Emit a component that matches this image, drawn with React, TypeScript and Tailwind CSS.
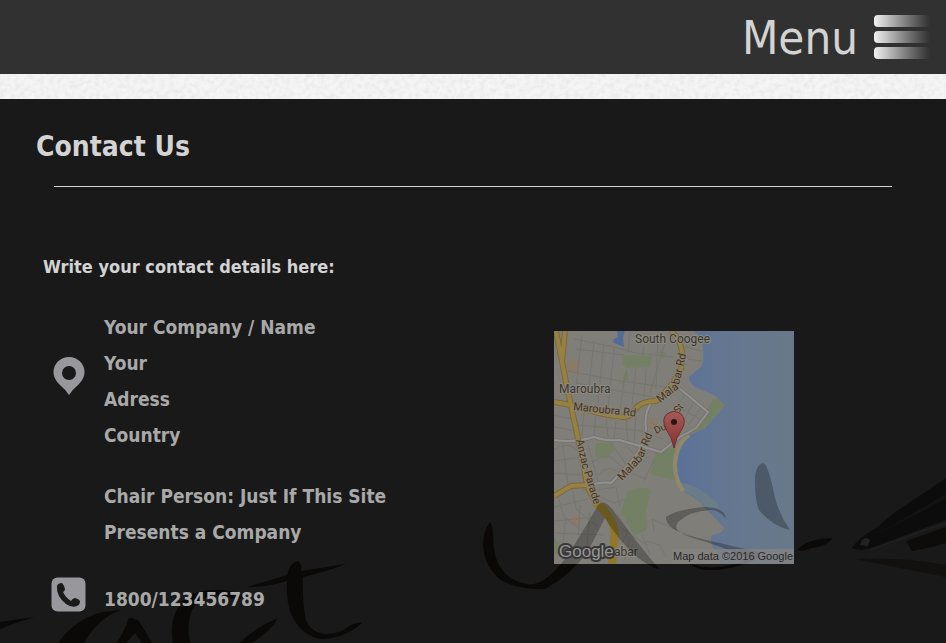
import React from 'react';

const address = ['Your Company / Name', 'Your', 'Adress', 'Country'];

const streets = [
  'M20 8L60 16L82 22L120 26', 'M22 18L70 24', 'M14 40L66 50L112 56', 'M22 52L64 60L100 66', 'M28 4L22 56', 'M40 10L34 66', 'M50 12L44 72', 'M60 18L54 76',
  'M72 40L66 78', 'M82 38L78 74', 'M92 38L90 66', 'M104 0L102 58', 'M112 8L96 62', 'M76 0L74 22', 'M90 16L88 26', 'M130 4L146 8', 'M132 16L148 20', 'M134 28L148 30',
  'M0 84L18 88L26 96', 'M30 82L28 104', 'M42 84L40 104', 'M52 88L54 106', 'M62 90L60 108', 'M72 88L74 110', 'M82 84L80 114', 'M24 94L90 100', 'M0 96L22 100',
  'M0 118Q18 108 26 124', 'M0 130L28 126', 'M8 108L14 154', 'M0 142L30 144', 'M34 114L44 150', 'M38 132Q52 118 64 132T76 140', 'M44 144Q56 130 70 146', 'M60 116L74 136', 'M70 112L84 128',
  'M36 160L62 156L66 176', 'M46 166L60 172L72 168', 'M0 176L34 168', 'M4 166L10 186L30 200', 'M18 156L22 178L44 196', 'M0 190L40 186', 'M0 202L50 204', 'M12 186L8 220', 'M26 174L24 214', 'M36 180L32 226',
  'M64 184L74 200L66 216', 'M66 196L92 214', 'M76 206L70 230', 'M88 204L96 224', 'M92 210L106 214L112 226', 'M100 200L98 188L116 196L140 206', 'M132 62L120 80', 'M142 68L130 88', 'M150 74L134 94', 'M124 76L146 88', 'M98 92L114 100', 'M96 104L110 108', 'M94 116L108 122', 'M100 128L90 150', 'M66 138L92 148',
];

// Brush lettering behind the page, in page coordinates
const Lettering: React.FC = () => (
  <g>
    <path d="M0 622Q18 619 35 617Q20 621 0 629Z" />
    <path d="M58 643Q76 618 103 612L121 610Q98 618 84 643Z" />
    <path d="M117 643Q126 628 128 619Q131 616 139 621L152 643H142L135 633L126 643Z" />
    <path d="M173 643Q168 616 185 598Q200 588 224 590Q240 592 243 597Q235 601 226 596Q202 592 192 610Q186 624 190 643Z" />
    <path d="M239 643Q258 626 278 618Q272 630 252 643Z" />
    <path d="M247 587L287 575Q290 562 298 561Q303 564 301 571L346 564Q326 572 303 577Q302 602 306 620Q311 633 326 634Q342 633 349 626Q356 622 362 623Q344 639 321 639Q301 636 291 614Q286 600 287 581Q268 587 247 587Z" />
    <path d="M490 522Q483 531 483 546Q485 568 501 580Q517 590 545 589Q568 577 587 553L605 518Q617 539 637 557Q650 567 659 569Q638 544 613 510Q604 498 598 505Q575 546 561 564Q542 587 527 584Q503 580 496 558Q493 545 493 536Q493 526 490 522Z" />
    <path d="M726 519Q725 507 704 507Q678 509 666 517Q665 527 686 535Q719 543 758 552Q763 558 747 563Q727 571 704 570Q692 567 688 562Q700 569 719 567Q742 564 746 558Q722 546 690 537Q671 531 678 522Q690 511 710 510Q720 510 726 519Z" />
    <path d="M762 463Q755 467 755 479Q755 502 759 510Q772 526 790 530Q780 516 775 498Q770 472 765 464Z" />
    <path d="M797 550Q804 542 820 539L833 538Q827 546 812 548Q802 552 797 550Z" />
  </g>
);

const Pen: React.FC = () => (
  <g>
    <path d="M855 559Q902 557 946 565V577Q900 568 855 559Z" fill="#13110f" />
    <path d="M852 548Q858 538 876 528L895 512L946 478V520L868 549Q858 551 852 548Z" fill="#0d0c0c" />
    <path d="M874 536L946 494V499Z" fill="#131211" />
    <path d="M860 545L862 540Q866 536 870 540L868 546Z" fill="#232221" />
    <path d="M870 550L946 523" stroke="#232323" strokeWidth="1" />
    <path d="M906 541L946 527V543L932 547L912 551Z" fill="#0d0c0b" />
    <path d="M868 559Q884 548 896 543" stroke="#1f1e1d" strokeWidth="1" fill="none" />
  </g>
);

const MapPreview: React.FC = () => (
  <svg viewBox="0 0 240 233" role="img" aria-label="Map of Maroubra" className="block w-60 font-normal" fontFamily="Roboto, sans-serif">
    <defs>
      <linearGradient id="sea" x1="0" x2="1">
        <stop offset="0" stopColor="#5b719a" />
        <stop offset="0.45" stopColor="#65778f" />
        <stop offset="1" stopColor="#69798b" />
      </linearGradient>
      <linearGradient id="marker" x1="0" x2="0" y1="0" y2="1">
        <stop offset="0" stopColor="#a45b58" />
        <stop offset="1" stopColor="#8b302f" />
      </linearGradient>
    </defs>
    <rect width="240" height="233" fill="#807e79" />
    <path d="M14 28L26 30L24 43L12 41ZM20 184L27 186L25 195L18 193ZM94 86L105 87L102 98L94 97Z" fill="#8a7b69" />
    <g fill="#748064">
      <path d="M70 24L98 25L96 36L72 37L68 33Z" />
      <path d="M73 38L75 50L71 51L68 57L69 46ZM105 21L111 21L110 28L105 26ZM28 158L32 156L31 162ZM0 206L8 216L4 224L0 222Z" />
      <path d="M42 112L59 111L61 118L52 128L41 125Z" />
      <path d="M73 161Q80 155 97 158L92 182L93 199L80 205L70 186L66 184Z" />
      <path d="M102 119L122 116L122 150L96 143Z" />
      <path d="M158 70L163 67L171 74L163 84L148 99L132 104L144 93Z" />
    </g>
    <g fill="none" stroke="#777570" strokeWidth="1">
      {streets.map((d) => <path key={d} d={d} />)}
    </g>
    <path d="M63 0H71L69 7L70 16L60 12Q57 8 64 6Z" fill="#526c98" />
    <path d="M140 0Q149 8 149 19Q150 32 147 36L135 46Q135 53 143 57L160 64L171 74L163 84L150 98L135 104Q126 113 124 125Q120 139 123 146L130 161Q146 169 150 176L163 189L170 197Q168 203 158 204Q154 211 163 222L166 233H240V0Z" fill="url(#sea)" />
    <path d="M125 152Q139 152 154 164Q166 172 166 181Q153 178 148 173Q137 162 130 161Z" fill="#6b7c89" />
    <path d="M135 104Q125 111 122 125Q118 143 129 160" fill="none" stroke="#91886a" strokeWidth="4" />
    <g fill="none" strokeLinejoin="round">
      <path d="M0 109Q20 112 40 106Q51 110 65 109L107 121L126 106L142 97L154 81L125 57M97 72Q90 82 92 97Q92 112 78 130L57 152Q48 150 33 155" stroke="#767572" strokeWidth="4" />
      <path d="M0 109Q20 112 40 106Q51 110 65 109L107 121L126 106L142 97L154 81L125 57M97 72Q90 82 92 97Q92 112 78 130L57 152Q48 150 33 155" stroke="#929190" strokeWidth="2" />
      <path d="M2 0L13 56L22 98L31 142Q34 165 46 174Q60 188 60 202L58 233M11 0L8 30M0 71L17 74Q45 84 70 86Q79 85 82 77Q88 70 102 70Q119 55 127 38Q132 12 117 0M0 165L17 155L33 154" stroke="#7a6a3a" strokeWidth="6" />
      <path d="M2 0L13 56L22 98L31 142Q34 165 46 174Q60 188 60 202L58 233M11 0L8 30M0 71L17 74Q45 84 70 86Q79 85 82 77Q88 70 102 70Q119 55 127 38Q132 12 117 0M0 165L17 155L33 154" stroke="#968142" strokeWidth="4" />
      <path d="M41 171Q60 186 61 203L58 233" stroke="#8f7829" strokeWidth="8" />
    </g>
    <g fill="#393630" stroke="#8d8a82" strokeWidth="2" paintOrder="stroke" fontSize="12">
      <text x="81" y="12">South Coogee</text>
      <text x="5" y="62">Maroubra</text>
      <text x="60" y="225">abar</text>
    </g>
    <g fill="#45331f" stroke="#898374" strokeWidth="2" paintOrder="stroke" fontSize="11">
      <text transform="translate(19 79) rotate(6)">Maroubra Rd</text>
      <text transform="translate(106 72) rotate(-38)">Mala</text>
      <text transform="translate(125 54) rotate(-77)">bar Rd</text>
      <text transform="translate(22 109) rotate(77)">Anzac</text>
      <text transform="translate(30 141) rotate(73)">Parade</text>
      <text transform="translate(68 150) rotate(-46)">Malab</text>
      <text transform="translate(89 127) rotate(-68)">ar Rd</text>
      <text transform="translate(102 103) rotate(-25)" fontSize="10">Du</text>
      <text transform="translate(124 83) rotate(-50)" fontSize="10">St</text>
    </g>
    <g opacity="0.25" fill="#000">
      <g transform="translate(-554 -331)"><Lettering /></g>
    </g>
    <path d="M120 117Q118 106 112 98Q107 88 113 83Q120 78 127 83Q133 89 128 98Q122 106 120 117Z" fill="url(#marker)" stroke="#702e2c" />
    <circle cx="120" cy="91" r="3" fill="#2a1514" />
    <text x="5" y="226" fontFamily="Liberation Sans, sans-serif" fontSize="17" fill="#979694" stroke="#393939" strokeWidth="4" paintOrder="stroke" strokeLinejoin="round">Google</text>
    <rect x="118" y="218" width="122" height="15" fill="#858482" fillOpacity="0.75" />
    <text x="119" y="229" fontFamily="Liberation Sans, sans-serif" fontSize="11" fill="#282828">Map data ©2016 Google</text>
  </svg>
);

const PinIcon: React.FC = () => (
  <svg viewBox="0 0 32 38" className="w-8" aria-hidden="true">
    <path fill="#98989c" fillRule="evenodd" d="M16 0C7 0 0.5 7 0.5 15C0.5 21 4 25 8 29Q13 33 16 38Q19 33 24 29C28 25 31.5 21 31.5 15C31.5 7 25 0 16 0ZM16 9A7 7 0 1 1 16 23A7 7 0 1 1 16 9Z" />
  </svg>
);

const PhoneIcon: React.FC = () => (
  <svg viewBox="0 0 36 36" className="w-9" aria-hidden="true">
    <rect x="0.5" y="0.5" width="34" height="34" rx="6" fill="#98989c" />
    <path d="M6 9Q7 6 11 6Q13 8 14 12Q14 14 12 15Q14 20 20 24Q22 21 24 21Q28 22 29 24Q29 28 26 29Q21 31 15 27Q5 19 6 9Z" fill="#1a1a1a" />
  </svg>
);

const Texture: React.FC = () => (
  <svg className="h-full w-full" aria-hidden="true">
    <filter id="paper">
      <feTurbulence type="fractalNoise" baseFrequency="0.2" numOctaves="3" />
      <feColorMatrix values="0 0 0 0 0.7  0 0 0 0 0.7  0 0 0 0 0.7  0.9 0 0 0 -0.35" />
    </filter>
    <rect width="100%" height="100%" filter="url(#paper)" />
  </svg>
);

const App: React.FC = () => {
  return (
    <div className="min-h-screen bg-[#191919] font-['DejaVu_Sans_Condensed','DejaVu_Sans',sans-serif] text-[#d3d3d3]">
      <header className="flex h-[74px] justify-end bg-[#313131] px-4">
        <button type="button" className="flex items-center gap-4 text-[47px] leading-none">
          <span>Menu</span>
          <span className="flex w-14 flex-col gap-1">
            <span className="h-3 rounded-sm bg-linear-to-r from-[#f2f2f2] to-[#313131]" />
            <span className="h-3 rounded-sm bg-linear-to-r from-[#f2f2f2] to-[#313131]" />
            <span className="h-3 rounded-sm bg-linear-to-r from-[#f2f2f2] to-[#313131]" />
          </span>
        </button>
      </header>
      <div className="h-[25px] bg-[#f4f4f4]">
        <Texture />
      </div>

      <main className="relative overflow-hidden pb-[26px]">
        <svg viewBox="0 99 946 544" className="absolute top-0 left-0 h-[544px] w-[946px]" aria-hidden="true">
          <g fill="#0a0908"><Lettering /></g>
          <Pen />
        </svg>

        <div className="relative">
          <h1 className="px-9 pt-[30px] text-[28px] leading-9 font-bold">Contact Us</h1>
          <hr className="mx-[54px] mt-[21px] border-[#d3d3d3]" />
          <h2 className="mt-[62px] px-[43px] text-lg leading-9 font-bold">Write your contact details here:</h2>

          <div className="grid grid-cols-[554px_1fr] items-start text-[19px] leading-9 font-bold text-[#a9a9a9]">
            <address className="not-italic">
              <div className="mt-6 flex">
                <div className="w-[104px] shrink-0 pt-12 pl-[53px]">
                  <PinIcon />
                </div>
                <div>
                  {address.map((line) => <p key={line}>{line}</p>)}
                  <p className="mt-[25px] w-[300px]">Chair Person: Just If This Site Presents a Company</p>
                </div>
              </div>
              <div className="mt-[27px] flex">
                <div className="w-[104px] shrink-0 pl-[51px]">
                  <PhoneIcon />
                </div>
                <a href="tel:1800123456789" className="pt-1">1800/123456789</a>
              </div>
            </address>
            <div className="mt-[46px]">
              <MapPreview />
            </div>
          </div>
        </div>
      </main>
    </div>
  );
};

export default App;
